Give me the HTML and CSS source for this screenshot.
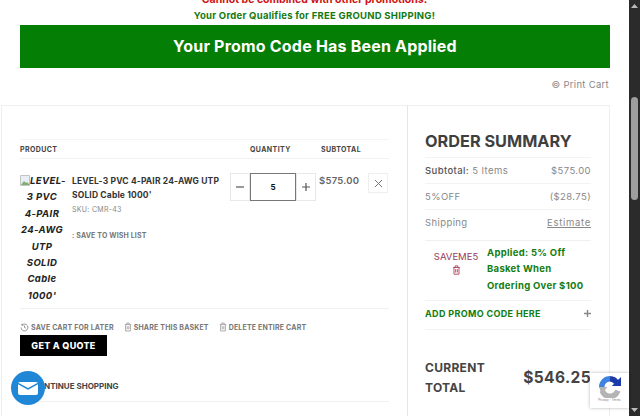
FILE: index.html
```html
<!DOCTYPE html>
<html lang="en">
<head>
<meta charset="utf-8">
<title>Cart</title>
<link rel="stylesheet" href="styles.css">
</head>
<body>
<div class="viewport">
  <main class="page">
    <p class="notice-red">Cannot be combined with other promotions.</p>
    <p class="notice-green">Your Order Qualifies for FREE GROUND SHIPPING!</p>
    <div class="banner">Your Promo Code Has Been Applied</div>
    <div class="print-row"><span class="print">© Print Cart</span></div>
    <section class="cart">
      <div class="items">
        <div class="head-row">
          <span class="col-product">PRODUCT</span>
          <span class="col-qty">QUANTITY</span>
          <span class="col-sub">SUBTOTAL</span>
        </div>
        <div class="item-row">
          <div class="thumb">
            <svg class="broken" width="10" height="11" viewBox="0 0 10 11"><path d="M.5.5h9v10H.5z" fill="#e8eef5" stroke="#c4c4c4"/><path d="M1 10l3-4 2 2 1-1 3 3z" fill="#7fb06f"/></svg>LEVEL-<br>3 PVC<br>4-PAIR<br>24-AWG<br>UTP<br>SOLID<br>Cable<br>1000'
          </div>
          <div class="details">
            <div class="name">LEVEL-3 PVC 4-PAIR 24-AWG UTP SOLID Cable 1000'</div>
            <div class="sku">SKU: CMR-43</div>
            <div class="wish">: SAVE TO WISH LIST</div>
          </div>
          <div class="stepper">
            <span class="step">
              <svg width="10" height="10" viewBox="0 0 10 10"><path d="M1 5h8" stroke="#555" stroke-width="1.2"/></svg>
            </span>
            <span class="qty">5</span>
            <span class="step">
              <svg width="10" height="10" viewBox="0 0 10 10"><path d="M1 5h8M5 1v8" stroke="#555" stroke-width="1.2"/></svg>
            </span>
          </div>
          <div class="price">$575.00</div>
          <div class="remove">
            <svg width="9" height="9" viewBox="0 0 9 9"><path d="M1 1l7 7M8 1l-7 7" stroke="#777" stroke-width="1"/></svg>
          </div>
        </div>
        <div class="actions">
          <span class="action">
            <svg width="9" height="9" viewBox="0 0 12 12"><path d="M2.500 3A4.600 4.600 0 1 1 1.400 6M2.500 1v2h2M6 3.400V6l2 1" fill="none" stroke="#777"/></svg>SAVE CART FOR LATER</span>
          <span class="action">
            <svg width="8" height="10" viewBox="0 0 10 12"><path d="M1 3h8M3.500 3V1h3v2M2 3v8h6V3M4 5v4M6 5v4" fill="none" stroke="#999"/></svg>SHARE THIS BASKET</span>
          <span class="action">
            <svg width="8" height="10" viewBox="0 0 10 12"><path d="M1 3h8M3.500 3V1h3v2M2 3v8h6V3M4 5v4M6 5v4" fill="none" stroke="#999"/></svg>DELETE ENTIRE CART</span>
        </div>
        <a class="quote">GET A QUOTE</a>
        <div class="continue">CONTINUE SHOPPING</div>
      </div>
      <aside class="summary">
        <h2 class="sum-title">ORDER SUMMARY</h2>
        <div class="sum-row"><span><b class="sub-label">Subtotal:</b> 5 Items</span><span>$575.00</span></div>
        <div class="sum-row"><span>5%OFF</span><span>($28.75)</span></div>
        <div class="sum-row ship"><span>Shipping</span><span class="est">Estimate</span></div>
        <div class="promo">
          <div class="code">SAVEME5
            <svg class="code-icon" width="9" height="10" viewBox="0 0 10 12"><path d="M1 3h8M3.500 3V1h3v2M2 3v8h6V3M4 5v4M6 5v4" fill="none" stroke="#a8324e"/></svg>
          </div>
          <div class="applied">Applied: 5% Off Basket When Ordering Over $100</div>
        </div>
        <div class="add-promo"><span>ADD PROMO CODE HERE</span><svg width="7" height="7" viewBox="0 0 8 8"><path d="M0 4h8M4 0v8" stroke="#888" stroke-width="1.6"/></svg></div>
        <div class="total"><span class="t-label">CURRENT TOTAL</span><span class="t-val">$546.25</span></div>
      </aside>
    </section>
  </main>
  <div class="scrollbar">
    <svg width="11" height="12" viewBox="0 0 11 12"><path d="M2 8l3.500-4L9 8z" fill="#bbb"/></svg>
    <div class="track"><div class="thumb-bar"></div></div>
    <svg width="11" height="12" viewBox="0 0 11 12"><path d="M2 4l3.500 4L9 4z" fill="#bbb"/></svg>
  </div>
</div>
<div class="chat">
  <svg width="20" height="13" viewBox="0 0 20 13"><rect width="20" height="13" rx="2" fill="#fff"/><path d="M0 1.500l10 5.500 10-5.500" fill="none" stroke="#1f87d6" stroke-width="1.500"/></svg>
</div>
<div class="recaptcha">
  <svg width="22" height="22" viewBox="0 0 24 24"><path d="M3.500 16A9 9 0 0 0 20.500 16" fill="none" stroke="#b4b4b4" stroke-width="6"/><path d="M3 12A9 9 0 0 1 12 3" fill="none" stroke="#3f83e0" stroke-width="6"/><path d="M12 3A9 9 0 0 1 19 7" fill="none" stroke="#1c3aa9" stroke-width="6"/><path d="M14 11h10V1z" fill="#1c3aa9"/><path d="M0 12h9L3 20z" fill="#b4b4b4"/></svg>
  <span class="rc-text">Privacy - Terms</span>
</div>
</body>
</html>
```
FILE: styles.css
```css
* { box-sizing: border-box; }
html, body { margin: 0; height: 416px; overflow: hidden; background: #fff; }
body { font-family: "Inter", "Liberation Sans", sans-serif; color: #444; position: relative; }
.viewport { display: flex; width: 640px; height: 416px; overflow: hidden; }
.page { width: 629px; flex: none; margin-top: -10px; }
p { margin: 0; }
.notice-red { height: 17px; line-height: 20px; text-align: center; font-size: 10.500px; font-weight: 700; color: #d01010; }
.notice-green { height: 18px; line-height: 17px; text-align: center; font-size: 9.500px; font-weight: 700; color: #137a13; letter-spacing: .25px; }
.banner { margin: 0 19px 0 20px; height: 43px; background: #057e05; color: #fff; font-size: 16px; font-weight: 700; text-align: center; line-height: 43px; letter-spacing: .2px; }
.print-row { padding: 9px 20px 0 0; height: 37px; text-align: right; font-size: 9.500px; line-height: 16px; color: #888; letter-spacing: .3px; }
.cart { display: flex; margin: 0 19px 0 1px; border: 1px solid #eee; height: 340px; }
.items { width: 406px; flex: none; padding: 33px 18px 0 18px; border-right: 1px solid #e6e6e6; }
.head-row { display: flex; height: 20px; border-top: 1px solid #f5f5f5; border-bottom: 1px solid #f2f2f2; font-size: 7px; font-weight: 700; letter-spacing: .4px; line-height: 19px; color: #444; }
.col-product { width: 230px; }
.col-qty { width: 71px; }
.item-row { display: flex; align-items: flex-start; padding-top: 14px; height: 150px; border-bottom: 1px solid #f0f0f0; }
.thumb { width: 44px; flex: none; font-size: 9.500px; line-height: 16.400px; font-weight: 700; font-style: italic; text-align: center; color: #222; letter-spacing: .4px; margin-right: 8px; white-space: nowrap; }
.broken { vertical-align: -2px; }
.details { width: 158px; flex: none; margin-top: 1px; }
.name { font-size: 8.500px; font-weight: 700; line-height: 14px; color: #333; letter-spacing: .15px; }
.sku { font-size: 7px; line-height: 14px; color: #888; margin-top: 1px; letter-spacing: .3px; }
.wish { font-size: 7px; font-weight: 700; color: #777; margin-top: 12px; line-height: 14px; letter-spacing: .15px; }
.stepper { display: flex; height: 28px; flex: none; margin-right: 3px; }
.step { width: 20px; border: 1px solid #e8e8e8; display: flex; align-items: center; justify-content: center; }
.qty { width: 46px; border: 1px solid #777; font-size: 8px; font-weight: 700; color: #111; display: flex; align-items: center; justify-content: center; }
.price { width: 49px; font-size: 9.500px; font-weight: 600; color: #666; line-height: 16px; letter-spacing: .25px; flex: none; }
.remove { width: 20px; height: 20px; border: 1px solid #eee; display: flex; align-items: center; justify-content: center; flex: none; }
.actions { display: flex; gap: 10px; padding-top: 13px; height: 26px; font-size: 7px; font-weight: 700; color: #777; letter-spacing: .18px; }
.action { display: flex; align-items: center; gap: 2px; height: 10px; }
.quote { display: block; width: 87px; height: 21px; background: #000; color: #fff; font-size: 9px; font-weight: 800; line-height: 21px; text-align: center; letter-spacing: .3px; }
.continue { margin-top: 20px; height: 26px; line-height: 14px; padding: 3px 0 0 12px; font-size: 8px; font-weight: 700; color: #444; border-bottom: 1px solid #f0f0f0; }
.summary { flex: 1; padding: 25px 18px 0 17px; }
.sum-title { margin: 0; font-size: 16.300px; line-height: 20px; font-weight: 700; color: #3f3f3f; height: 26px; }
.sum-row { display: flex; justify-content: space-between; height: 26px; line-height: 25px; font-size: 9.500px; color: #888; border-top: 1px solid #f3f3f3; letter-spacing: .4px; }
.sum-row.ship { height: 31px; }
.sub-label { font-weight: 500; color: #555; }
.est { text-decoration: underline; letter-spacing: .7px; }
.promo { display: flex; border-top: 1px solid #f0f0f0; padding-top: 4px; height: 60px; }
.code { width: 62px; text-align: center; font-size: 9.500px; color: #963a5a; padding-top: 6px; line-height: 12px; }
.code-icon { display: block; margin: 2px auto 0; }
.applied { flex: 1; font-size: 9.500px; font-weight: 700; line-height: 16.400px; color: #127d12; letter-spacing: .3px; padding-right: 5px; }
.add-promo { display: flex; justify-content: space-between; align-items: center; height: 30px; padding-bottom: 4px; border-top: 1px solid #f3f3f3; border-bottom: 1px solid #f3f3f3; font-size: 9px; font-weight: 700; color: #127d12; letter-spacing: .35px; }
.total { display: flex; justify-content: space-between; align-items: center; margin-top: 28px; }
.t-label { width: 70px; font-size: 12px; font-weight: 700; line-height: 19.500px; color: #444; letter-spacing: .3px; }
.t-val { font-size: 15.500px; font-weight: 700; color: #444; letter-spacing: .4px; }
.scrollbar { width: 11px; flex: none; background: #2b2b2b; display: flex; flex-direction: column; }
.track { flex: 1; padding-top: 85px; }
.thumb-bar { width: 7px; height: 103px; margin-left: 2px; background: #9e9e9e; border-radius: 4px; }
.chat { position: absolute; left: 11px; top: 371px; width: 34px; height: 34px; border-radius: 50%; background: #1f87d6; display: flex; align-items: center; justify-content: center; }
.recaptcha { position: absolute; left: 590px; top: 373px; width: 39px; height: 35px; background: #fff; box-shadow: 0 0 3px rgba(0,0,0,.3); display: flex; flex-direction: column; align-items: center; padding-top: 3px; }
.rc-text { font-size: 3px; color: #777; line-height: 5px; white-space: nowrap; }
```
